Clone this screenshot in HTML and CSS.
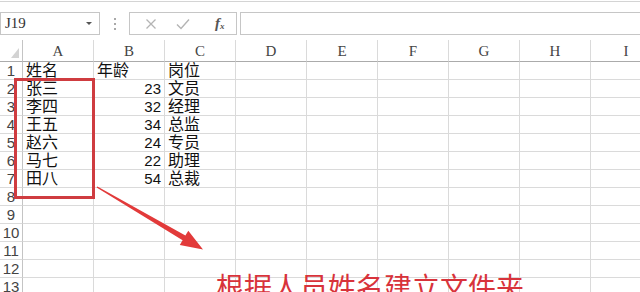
FILE: index.html
```html
<!DOCTYPE html>
<html lang="zh-CN">
<head>
    <meta charset="UTF-8">
    <meta name="viewport" content="width=device-width, initial-scale=1.0">
    <title>姓名列表</title>
    <link rel="stylesheet" href="styles.css">
</head>
<body>
    <div class="page">
        <div class="top-edge"></div>

        <div class="formula-bar">
            <div class="name-box">
                <span>J19</span>
                <span class="drop"></span>
            </div>
            <div class="dots"><i></i><i></i><i></i></div>
            <div class="fn-box">
                <svg class="icon" width="12" height="12" viewBox="0 0 12 12">
                    <path d="M1.5 1.5 L10.5 10.5 M10.5 1.5 L1.5 10.5" stroke="#b4b4b4" stroke-width="1.3" fill="none"/>
                </svg>
                <svg class="icon" width="14" height="12" viewBox="0 0 14 12">
                    <path d="M1 6.5 L5 10.5 L13 1.5" stroke="#b4b4b4" stroke-width="1.4" fill="none"/>
                </svg>
                <span class="fx">f<sub>x</sub></span>
            </div>
            <div class="formula-input"></div>
        </div>

        <div class="sheet">
            <div class="corner"><span class="tri"></span></div>
            <div class="col-head">A</div>
            <div class="col-head">B</div>
            <div class="col-head">C</div>
            <div class="col-head">D</div>
            <div class="col-head">E</div>
            <div class="col-head">F</div>
            <div class="col-head">G</div>
            <div class="col-head">H</div>
            <div class="col-head">I</div>
        </div>

        <div class="grid" id="grid"></div>

        <!-- annotations drawn on top of the sheet -->
        <div class="mark-box"></div>
        <svg class="arrow" width="640" height="292" viewBox="0 0 640 292">
            <polygon points="96.6,187.5 182.6,240.2 179.8,244.9 203,249.5 188.3,230.8 185.4,235.6 97.4,186.5" fill="#e23a3a"/>
        </svg>
        <div class="note">根据人员姓名建立文件夹</div>
    </div>

    <script>
        const rows = [
            ['姓名', '年龄', '岗位'],
            ['张三', '23', '文员'],
            ['李四', '32', '经理'],
            ['王五', '34', '总监'],
            ['赵六', '24', '专员'],
            ['马七', '22', '助理'],
            ['田八', '54', '总裁']
        ];
        const grid = document.getElementById('grid');
        for (let r = 1; r <= 13; r++) {
            const head = document.createElement('div');
            head.className = 'row-head';
            head.textContent = r;
            grid.appendChild(head);
            const data = rows[r - 1] || [];
            for (let c = 0; c < 9; c++) {
                const cell = document.createElement('div');
                cell.className = 'cell';
                const val = data[c];
                if (val) {
                    cell.textContent = val;
                    if (/^\d+$/.test(val)) cell.classList.add('num');
                }
                grid.appendChild(cell);
            }
        }
    </script>
</body>
</html>
```

FILE: styles.css
```css
body {
    margin: 0;
    background: #fff;
    font-family: "Liberation Sans", "Noto Sans CJK SC", sans-serif;
    color: #222;
}

.page {
    position: relative;
    width: 640px;
    height: 292px;
    overflow: hidden;
}

.top-edge {
    height: 1px;
    margin-top: 1px;
    background: #d4d4d4;
}

/* formula bar */

.formula-bar {
    display: flex;
    height: 23px;
    margin-top: 10px;
}

.name-box {
    width: 100px;
    box-sizing: border-box;
    border: 1px solid #c6c6c6;
    display: flex;
    align-items: center;
    justify-content: space-between;
    padding: 0 7px 0 4px;
    font-family: "Liberation Serif", serif;
    font-size: 15px;
    color: #333;
}

.drop {
    width: 0;
    height: 0;
    border-left: 3px solid transparent;
    border-right: 3px solid transparent;
    border-top: 3px solid #555;
}

.dots {
    width: 29px;
    display: flex;
    flex-direction: column;
    align-items: center;
    justify-content: center;
    gap: 3px;
}

.dots i {
    width: 2px;
    height: 2px;
    background: #a9a9a9;
}

.fn-box {
    width: 108px;
    box-sizing: border-box;
    border: 1px solid #c6c6c6;
    display: flex;
    align-items: center;
    padding-left: 15px;
    gap: 19px;
}

.fx {
    font-family: "Liberation Serif", serif;
    font-style: italic;
    font-weight: bold;
    font-size: 15px;
    color: #555;
    margin-left: 6px;
}

.fx sub {
    font-size: 9px;
    vertical-align: -1px;
}

.formula-input {
    flex: 1;
    margin-left: 3px;
    border: 1px solid #c6c6c6;
    border-right: none;
}

/* sheet */

.sheet,
.grid {
    display: grid;
    grid-template-columns: 23px repeat(9, 71px);
}

.sheet {
    margin-top: 5px;
    height: 22px;
}

.corner,
.col-head {
    box-sizing: border-box;
    height: 22px;
    border-bottom: 1px solid #ababab;
}

.corner {
    position: relative;
    border-right: 1px solid #c4c4c4;
}

.tri {
    position: absolute;
    right: 3px;
    bottom: 3px;
    width: 0;
    height: 0;
    border-left: 8px solid transparent;
    border-bottom: 10px solid #d3d3d3;
}

.col-head {
    border-right: 1px solid #dadada;
    text-align: center;
    font-family: "Liberation Serif", serif;
    font-size: 15px;
    line-height: 23px;
    color: #444;
}

.grid {
    grid-auto-rows: 18px;
}

.row-head,
.cell {
    box-sizing: border-box;
    border-bottom: 1px solid #dadada;
    height: 18px;
}

.row-head {
    border-right: 1px solid #c4c4c4;
    text-align: center;
    font-size: 15px;
    line-height: 18px;
    color: #444;
}

.cell {
    border-right: 1px solid #dadada;
    padding: 0 3px;
    font-size: 16px;
    line-height: 17px;
    color: #111;
    white-space: nowrap;
}

.cell.num {
    text-align: right;
    font-size: 15px;
}

/* annotations */

.mark-box {
    position: absolute;
    left: 14px;
    top: 78px;
    width: 81px;
    height: 121px;
    box-sizing: border-box;
    border: 3px solid #cf3c40;
}

.arrow {
    position: absolute;
    left: 0;
    top: 0;
}

.note {
    position: absolute;
    left: 216px;
    top: 272px;
    font-family: "Noto Sans CJK SC", sans-serif;
    font-size: 28px;
    line-height: 28px;
    color: #d8333b;
    white-space: nowrap;
}
```
